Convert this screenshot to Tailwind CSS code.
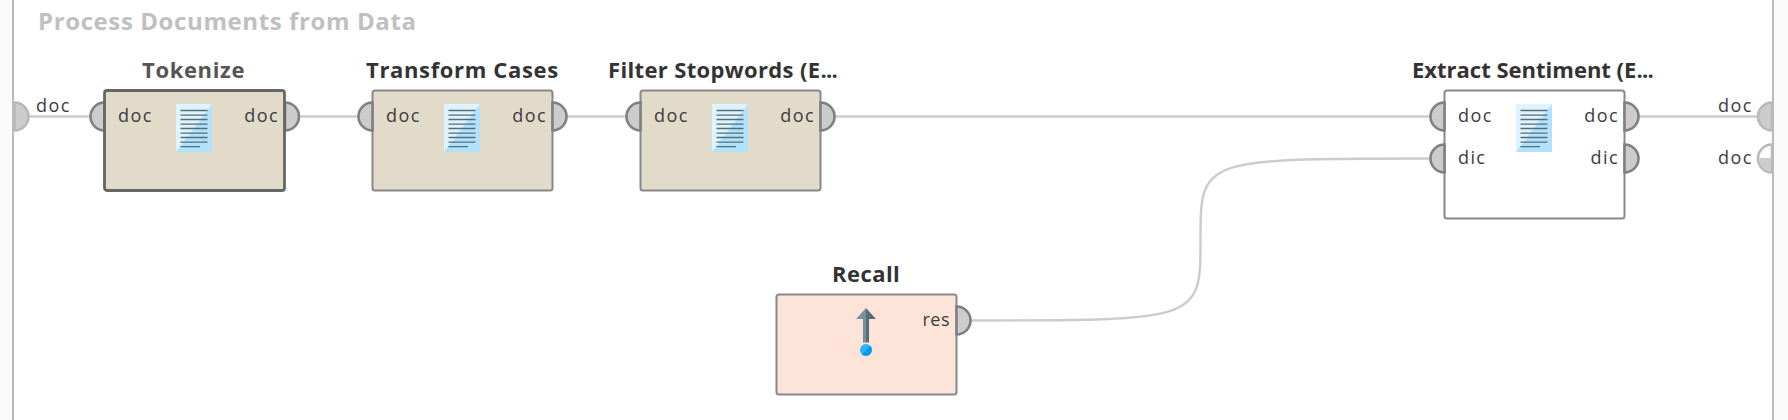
<!DOCTYPE html>
<html lang="en">
<head>
<meta charset="utf-8">
<title>Process Documents from Data</title>
<script src="https://cdn.jsdelivr.net/npm/@tailwindcss/browser@4"></script>
</head>
<body class="bg-[#fafafa] font-['Open_Sans','Noto_Sans',sans-serif]">
<svg class="absolute size-0" aria-hidden="true">
  <symbol id="document" viewBox="0 0 36 48">
    <path fill="#b0e3fb" d="M0 0h36v48H0z"/>
    <path fill="#def3fc" d="M0 0h36L0 48z"/>
    <path stroke="#546e7a" stroke-width="1.3" d="M4.5 6.5h27M4.5 11.2h27M4.5 15.5h27M4.5 20.2h27M4.5 24.5h27M4.5 29.2h27M4.5 33.5h27M4.5 38.2h27M4.5 42.7h19.5"/>
  </symbol>
  <symbol id="port-in" viewBox="0 0 17 32">
    <path fill="#ccc" stroke="#808080" stroke-width="2.6" d="M15.5 2A14 14 0 0 0 15.5 30Z"/>
  </symbol>
  <symbol id="port-out" viewBox="0 0 17 32">
    <path fill="#ccc" stroke="#808080" stroke-width="2.6" d="M1.5 2A14 14 0 0 1 1.5 30Z"/>
  </symbol>
</svg>

<main class="relative mx-auto ml-3 h-[420px] w-[1762px] overflow-hidden border-x-2 border-[#bababa] bg-white">
  <h1 class="pl-[24px] pt-[1px] text-[24px] font-bold leading-[40px] tracking-[0.6px] text-[#c0c0c0]">Process Documents from Data</h1>

  <!-- Everything below is placed in canvas coordinates, measured from the window corner -->
  <div class="absolute -left-[14px] top-0 h-[420px] w-[1788px] text-[18px] leading-5 tracking-[1.4px] text-[#3c3c3c]">
    <svg class="absolute inset-0" width="1788" height="420" fill="none">
      <g stroke="#ccc" stroke-width="2.4">
        <path d="M29 116.5H90M299 116.5H358M567 116.5H626M835 116.5H1430M1639 116.5H1758"/>
        <path d="M971 320.5C1200.5 320.5 1200.5 320.5 1200.5 239.5C1200.5 158.5 1200.5 158.5 1430 158.5"/>
      </g>
      <g stroke="#b9b9b9" stroke-width="2.6" fill="#ccc">
        <path d="M14.5 102.5A14 14 0 0 1 14.5 130.5Z"/>
        <path d="M1772 102.5A14 14 0 0 0 1772 130.5Z"/>
        <path fill="#fff" d="M1772 144.5A14 14 0 0 0 1772 172.5Z"/>
        <path stroke="none" d="M1759.3 158H1771V171.2A12.7 12.7 0 0 1 1759.3 158Z"/>
      </g>
    </svg>
    <span class="absolute left-[36px] top-[95px]">doc</span>
    <span class="absolute left-[1718px] top-[95px]">doc</span>
    <span class="absolute left-[1718px] top-[147px]">doc</span>

    <section class="absolute left-[105px] top-[49px] w-[180px]">
      <h2 class="mb-px ml-[37px] whitespace-nowrap text-[22px] font-bold leading-10 tracking-[0.65px] text-[#555]">Tokenize</h2>
      <div class="relative h-[102px]">
        <svg class="absolute left-0 top-0 overflow-visible" width="180" height="102">
          <use href="#port-in" x="-16" y="10.5" width="17" height="32"/>
          <use href="#port-out" x="178.5" y="10.5" width="17" height="32"/>
          <rect x="-0.5" y="0.5" width="180" height="100" rx="2.5" fill="#e3dbc9" stroke="#666" stroke-width="2.8"/>
          <use href="#document" x="71" y="14" width="36" height="48"/>
        </svg>
        <div class="relative flex justify-between pl-[13px] pr-[6px] pt-[15px]"><span>doc</span><span>doc</span></div>
      </div>
    </section>

    <section class="absolute left-[373px] top-[49px] w-[180px]">
      <h2 class="mb-px -ml-[7px] whitespace-nowrap text-[22px] font-bold leading-10 tracking-[0.65px] text-[#333]">Transform Cases</h2>
      <div class="relative h-[102px]">
        <svg class="absolute left-0 top-0 overflow-visible" width="180" height="102">
          <rect x="-0.5" y="0.5" width="180" height="100" rx="2.5" fill="#e3dbc9" stroke="#888" stroke-width="2"/>
          <use href="#port-in" x="-16" y="10.5" width="17" height="32"/>
          <use href="#port-out" x="178" y="10.5" width="17" height="32"/>
          <use href="#document" x="71" y="14" width="36" height="48"/>
        </svg>
        <div class="relative flex justify-between pl-[13px] pr-[6px] pt-[15px]"><span>doc</span><span>doc</span></div>
      </div>
    </section>

    <section class="absolute left-[641px] top-[49px] w-[180px]">
      <h2 class="mb-px -ml-[33px] whitespace-nowrap text-[22px] font-bold leading-10 tracking-[0.35px] text-[#333]">Filter Stopwords (E<span class="tracking-[-0.7px]">...</span></h2>
      <div class="relative h-[102px]">
        <svg class="absolute left-0 top-0 overflow-visible" width="180" height="102">
          <rect x="-0.5" y="0.5" width="180" height="100" rx="2.5" fill="#e3dbc9" stroke="#888" stroke-width="2"/>
          <use href="#port-in" x="-16" y="10.5" width="17" height="32"/>
          <use href="#port-out" x="178" y="10.5" width="17" height="32"/>
          <use href="#document" x="71" y="14" width="36" height="48"/>
        </svg>
        <div class="relative flex justify-between pl-[13px] pr-[6px] pt-[15px]"><span>doc</span><span>doc</span></div>
      </div>
    </section>

    <section class="absolute left-[1445px] top-[49px] w-[180px]">
      <h2 class="mb-px -ml-[33px] whitespace-nowrap text-[22px] font-bold leading-10 tracking-normal text-[#333]">Extract Sentiment (E<span class="tracking-[-0.7px]">...</span></h2>
      <div class="relative h-[130px]">
        <svg class="absolute left-0 top-0 overflow-visible" width="180" height="130">
          <rect x="-0.5" y="0.5" width="180" height="128" rx="2.5" fill="#fff" stroke="#888" stroke-width="2"/>
          <use href="#port-in" x="-16" y="10.5" width="17" height="32"/>
          <use href="#port-in" x="-16" y="52.5" width="17" height="32"/>
          <use href="#port-out" x="178" y="10.5" width="17" height="32"/>
          <use href="#port-out" x="178" y="52.5" width="17" height="32"/>
          <use href="#document" x="71" y="14" width="36" height="48"/>
        </svg>
        <div class="relative flex flex-col gap-[22px] pl-[13px] pr-[6px] pt-[15px]">
          <div class="flex justify-between"><span>doc</span><span>doc</span></div>
          <div class="flex justify-between"><span>dic</span><span>dic</span></div>
        </div>
      </div>
    </section>

    <section class="absolute left-[777px] top-[253px] w-[180px]">
      <h2 class="mb-px ml-[55px] whitespace-nowrap text-[22px] font-bold leading-10 tracking-[0.45px] text-[#333]">Recall</h2>
      <div class="relative h-[102px]">
        <svg class="absolute left-0 top-0 overflow-visible" width="180" height="102">
          <rect x="-0.5" y="0.5" width="180" height="100" rx="2.5" fill="#fee4d8" stroke="#888" stroke-width="2"/>
          <use href="#port-out" x="178" y="10.5" width="17" height="32"/>
          <path fill="#78909c" d="M89 14L79 25H86V48.5H89Z"/>
          <path fill="#546e7a" d="M89 14L99 25H92V48.5H89Z"/>
          <circle cx="89" cy="56" r="6" fill="#29b6f6"/>
          <path fill="#039be5" d="M93.24 51.76A6 6 0 0 1 84.76 60.24Z"/>
        </svg>
        <div class="relative flex justify-end pr-[7px] pt-[15px] tracking-[0.5px]"><span>res</span></div>
      </div>
    </section>
  </div>
</main>
</body>
</html>
